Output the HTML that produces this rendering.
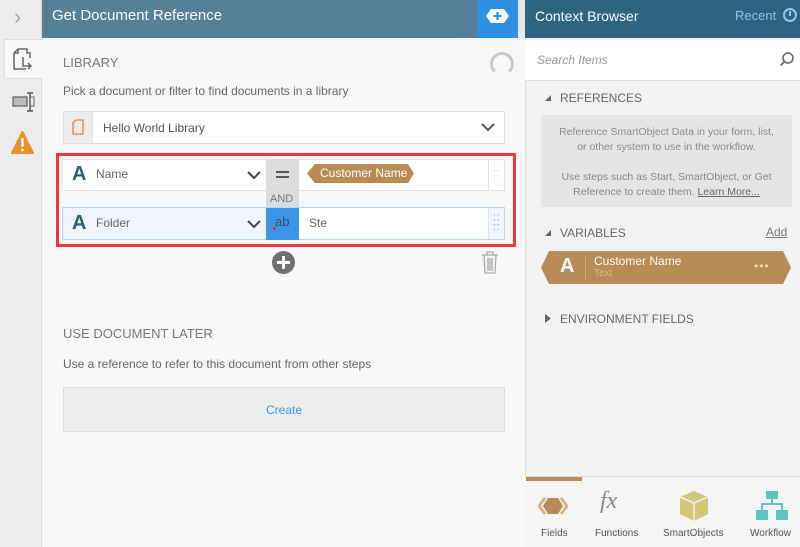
<!DOCTYPE html>
<html><head><meta charset="utf-8">
<style>
*{box-sizing:border-box;margin:0;padding:0}
body{width:800px;height:547px;overflow:hidden;font-family:"Liberation Sans",sans-serif;background:#f7f7f7;position:relative;color:#555}
.a{position:absolute}
.t{font-size:12px;color:#666}
.tri{position:absolute;width:0;height:0}
</style></head><body>
<!-- left sidebar -->
<div class="a" style="left:0;top:0;width:42px;height:547px;background:#ececec;border-right:1px solid #ddd"></div>
<div class="a" style="left:14px;top:4px;font-size:22px;color:#aaa;font-weight:300">&#8250;</div>
<div class="a" style="left:4px;top:39px;width:39px;height:40px;background:#f7f7f7;border:1px solid #ddd;border-right:none"></div>
<svg class="a" style="left:13px;top:47px" width="22" height="24" viewBox="0 0 22 24"><path d="M5 2h9v4h3v5M5 2L1 6v16h12M1 6h4V2" fill="none" stroke="#666" stroke-width="1.5"/><path d="M10 10v9h8M15 16l3 3-3 3" fill="none" stroke="#666" stroke-width="1.5"/></svg>
<svg class="a" style="left:12px;top:91px" width="24" height="22"><rect x="1" y="6" width="14" height="9" fill="#bbb" stroke="#666" stroke-width="1.3"/><path d="M18 2v18M15 2h6M15 20h6" stroke="#555" stroke-width="1.5"/><rect x="18" y="6" width="4" height="9" fill="none" stroke="#666"/></svg>
<svg class="a" style="left:11px;top:131px" width="23" height="24"><path d="M11.5 1L22 22H1z" fill="#e8922e" stroke="#e8922e" stroke-linejoin="round" stroke-width="2"/><rect x="10.3" y="7" width="2.4" height="9" fill="#fff"/><circle cx="11.5" cy="19" r="1.4" fill="#fff"/></svg>
<!-- main header -->
<div class="a" style="left:42px;top:0;width:483px;height:38px;background:#567f98"></div>
<div class="a" style="left:52px;top:7px;font-size:15px;color:#fff">Get Document Reference</div>
<div class="a" style="left:477px;top:0;width:41px;height:38px;background:#2f8fe2"></div>
<svg class="a" style="left:486px;top:9px" width="23" height="14"><path d="M5 0h13l5 7-5 7H5L0 7z" fill="#fff"/><path d="M11.5 3v8M7.5 7h8" stroke="#2f8fe2" stroke-width="2.2"/></svg>
<div class="a" style="left:518px;top:0;width:7px;height:38px;background:#e8e8e8"></div>
<!-- library -->
<div class="a" style="left:63px;top:55px;font-size:13px;color:#777">LIBRARY</div>
<div class="a" style="left:490px;top:52px;width:24px;height:24px;border:3px solid #c8c8c8;border-radius:50%;border-bottom-color:transparent"></div>
<div class="a t" style="left:63px;top:84px">Pick a document or filter to find documents in a library</div>
<div class="a" style="left:63px;top:111px;width:442px;height:33px;background:#fff;border:1px solid #ddd"></div>
<div class="a" style="left:63px;top:111px;width:30px;height:33px;background:#ececec;border:1px solid #ddd"></div>
<svg class="a" style="left:72px;top:119px" width="12" height="16"><path d="M4 1h7v14H1V4z" fill="none" stroke="#e67c3c" stroke-width="1.3"/></svg>
<div class="a t" style="left:103px;top:121px;color:#555">Hello World Library</div>
<svg class="a" style="left:481px;top:122px" width="14" height="10"><path d="M1 2l6 6 6-6" fill="none" stroke="#555" stroke-width="2"/></svg>
<!-- filter box -->
<div class="a" style="left:56px;top:153px;width:460px;height:94px;border:3px solid #f0353e"></div>
<div class="a" style="left:62px;top:159px;width:443px;height:32px;background:#fff;border:1px solid #e3e3e3"></div>
<div class="a" style="left:72px;top:163px;font-size:20px;font-weight:bold;color:#2e5d76">A</div>
<div class="a t" style="left:96px;top:167px">Name</div>
<svg class="a" style="left:247px;top:170px" width="14" height="10"><path d="M1 2l6 6 6-6" fill="none" stroke="#444" stroke-width="2"/></svg>
<div class="a" style="left:266px;top:159px;width:33px;height:48px;background:#dcdcdc"></div>
<div class="a" style="left:276px;top:171px;width:13px;height:2px;background:#555"></div>
<div class="a" style="left:276px;top:176px;width:13px;height:2px;background:#555"></div>
<div class="a" style="left:270px;top:193px;font-size:11px;color:#777">AND</div>
<div class="a" style="left:307px;top:164px;width:107px;height:19px;background:#b88a55;clip-path:polygon(8px 0,calc(100% - 6px) 0,100% 50%,calc(100% - 6px) 100%,8px 100%,0 50%)"></div>
<div class="a" style="left:320px;top:166px;font-size:12px;color:#fff">Customer Name</div>
<div class="a" style="left:488px;top:160px;width:1px;height:30px;background:#e3e3e3"></div>
<div class="a" style="left:493px;top:166px;color:#ddd;font-size:10px;line-height:5px;letter-spacing:1px">::<br>::<br>::</div>
<div class="a" style="left:62px;top:207px;width:443px;height:33px;background:#eef4f9;border:1px solid #b9d6ec"></div>
<div class="a" style="left:72px;top:212px;font-size:20px;font-weight:bold;color:#2e5d76">A</div>
<div class="a t" style="left:96px;top:216px">Folder</div>
<svg class="a" style="left:247px;top:219px" width="14" height="10"><path d="M1 2l6 6 6-6" fill="none" stroke="#444" stroke-width="2"/></svg>
<div class="a" style="left:266px;top:208px;width:33px;height:32px;background:#3b96ea"></div>
<div class="a" style="left:275px;top:214px;font-size:13px;color:#3a4d5a">ab</div>
<div class="a" style="left:273px;top:227px;width:3px;height:3px;background:#d33"></div>
<div class="a" style="left:299px;top:208px;width:190px;height:31px;background:#fff"></div>
<div class="a t" style="left:309px;top:216px">Ste</div>
<div class="a" style="left:488px;top:208px;width:1px;height:31px;background:#e3e3e3"></div>
<div class="a" style="left:493px;top:215px;color:#999;font-size:10px;line-height:5px;letter-spacing:1px">::<br>::<br>::</div>
<!-- plus & trash -->
<div class="a" style="left:272px;top:251px;width:23px;height:23px;border-radius:50%;background:#707070"></div>
<div class="a" style="left:277px;top:261px;width:13px;height:3px;background:#fff"></div>
<div class="a" style="left:282px;top:256px;width:3px;height:13px;background:#fff"></div>
<svg class="a" style="left:481px;top:250px" width="18" height="24"><path d="M1 5h16M6 5V2h6v3M3 5l1 18h10l1-18M7 8v13M9 8v13M11 8v13" fill="none" stroke="#aaa" stroke-width="1.3"/></svg>
<!-- use document later -->
<div class="a" style="left:63px;top:326px;font-size:13px;color:#777">USE DOCUMENT LATER</div>
<div class="a t" style="left:63px;top:357px">Use a reference to refer to this document from other steps</div>
<div class="a" style="left:63px;top:387px;width:442px;height:45px;background:#ececec;border:1px solid #ddd"></div>
<div class="a" style="left:266px;top:403px;font-size:12px;color:#3b96ea">Create</div>
<!-- right panel -->
<div class="a" style="left:525px;top:0;width:275px;height:547px;background:#f2f2f2;border-left:1px solid #ddd"></div>
<div class="a" style="left:525px;top:0;width:275px;height:38px;background:#2e6482"></div>
<div class="a" style="left:535px;top:8px;font-size:14px;color:#fff">Context Browser</div>
<div class="a" style="left:735px;top:8px;font-size:13px;color:#8ec4ee">Recent</div>
<div class="a" style="left:783px;top:8px;width:14px;height:14px;border:2px solid #8ec4ee;border-radius:50%"></div>
<div class="a" style="left:789px;top:11px;width:2px;height:5px;background:#8ec4ee"></div>
<div class="a" style="left:525px;top:40px;width:275px;height:41px;background:#fff;border-bottom:1px solid #ddd"></div>
<div class="a" style="left:537px;top:53px;font-size:12px;color:#999;font-style:italic">Search Items</div>
<svg class="a" style="left:779px;top:51px" width="16" height="16"><circle cx="9" cy="7" r="5" fill="none" stroke="#666" stroke-width="1.6"/><path d="M5.5 10.5L1.5 14.5" stroke="#666" stroke-width="1.8"/></svg>
<svg class="a" style="left:544px;top:94px" width="8" height="8"><path d="M7 1v6H1z" fill="#666"/></svg>
<div class="a" style="left:560px;top:91px;font-size:12px;color:#666">REFERENCES</div>
<div class="a" style="left:541px;top:115px;width:251px;height:92px;background:#e5e5e5"></div>
<div class="a" style="left:541px;top:125px;width:251px;text-align:center;font-size:10.5px;color:#888;line-height:15px">Reference SmartObject Data in your form, list,<br>or other system to use in the workflow.<br><br>Use steps such as Start, SmartObject, or Get<br>Reference to create them. <u style="color:#666">Learn More...</u></div>
<svg class="a" style="left:544px;top:229px" width="8" height="8"><path d="M7 1v6H1z" fill="#666"/></svg>
<div class="a" style="left:560px;top:226px;font-size:12px;color:#666">VARIABLES</div>
<div class="a" style="left:766px;top:225px;font-size:12px;color:#777;text-decoration:underline">Add</div>
<div class="a" style="left:541px;top:251px;width:250px;height:33px;background:#b88a55;clip-path:polygon(8px 0,calc(100% - 8px) 0,100% 50%,calc(100% - 8px) 100%,8px 100%,0 50%)"></div>
<div class="a" style="left:560px;top:255px;font-size:20px;font-weight:bold;color:#fff">A</div>
<div class="a" style="left:585px;top:256px;width:1px;height:24px;background:#cfa775"></div>
<div class="a" style="left:594px;top:254px;font-size:12px;color:#fff">Customer Name</div>
<div class="a" style="left:594px;top:268px;font-size:10px;color:#d8b892">Text</div>
<div class="a" style="left:754px;top:259px;font-size:12px;color:#e8d3b8;letter-spacing:1px">•••</div>
<svg class="a" style="left:544px;top:314px" width="8" height="9"><path d="M1 0l6 4.5L1 9z" fill="#666"/></svg>
<div class="a" style="left:560px;top:312px;font-size:12px;color:#666">ENVIRONMENT FIELDS</div>
<!-- bottom tabs -->
<div class="a" style="left:525px;top:476px;width:275px;height:71px;background:#f4f4f4;border-top:1px solid #ddd"></div>
<div class="a" style="left:526px;top:477px;width:56px;height:4px;background:#b88a55"></div>
<svg class="a" style="left:538px;top:496px" width="30" height="20"><path d="M7 2L1 10l6 8" fill="none" stroke="#d4b48c" stroke-width="3"/><path d="M23 2l6 8-6 8" fill="none" stroke="#d4b48c" stroke-width="3"/><path d="M10 2h10l5 8-5 8H10l-5-8z" fill="#b88a55"/></svg>
<div class="a" style="left:541px;top:528px;font-size:10px;color:#555">Fields</div>
<div class="a" style="left:600px;top:488px;font-size:24px;color:#888;font-style:italic;font-family:'Liberation Serif',serif">fx</div>
<div class="a" style="left:595px;top:528px;font-size:10px;color:#555">Functions</div>
<svg class="a" style="left:679px;top:490px" width="30" height="32"><path d="M15 1L29 7v17l-14 7L1 24V7z" fill="#cfc77a"/><path d="M1 7l14 6 14-6M15 13v18" stroke="#f4f4f4" stroke-width="1.3" fill="none"/></svg>
<div class="a" style="left:663px;top:528px;font-size:10px;color:#555">SmartObjects</div>
<svg class="a" style="left:756px;top:491px" width="32" height="30"><rect x="10" y="0" width="12" height="8" fill="#5dc4c0"/><rect x="0" y="19" width="12" height="10" fill="#5dc4c0"/><rect x="20" y="19" width="12" height="10" fill="#5dc4c0"/><path d="M16 8v5M6 19v-6h20v6" stroke="#5dc4c0" stroke-width="2" fill="none"/></svg>
<div class="a" style="left:750px;top:528px;font-size:10px;color:#555">Workflow</div>
</body></html>
